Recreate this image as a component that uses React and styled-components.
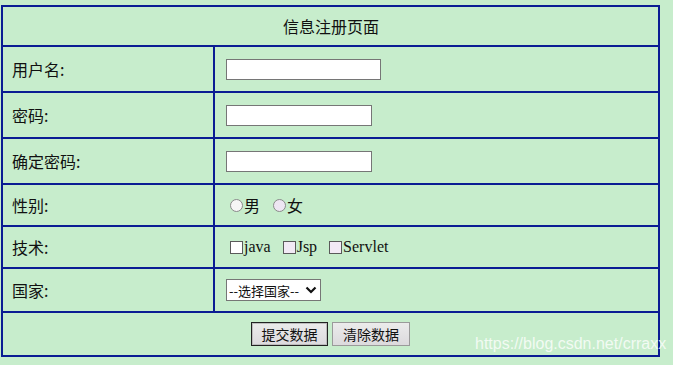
import React from "react";
import styled, { createGlobalStyle } from "styled-components";

const GlobalStyle = createGlobalStyle`
  html, body {
    margin: 0;
    padding: 0;
    background-color: #c7edcc;
  }
  body {
    font-family: "Liberation Sans", "Noto Sans CJK SC", sans-serif;
    color: #111;
  }
`;

const Page = styled.div`
  position: relative;
  padding: 5px 0 0 1px;
  width: 673px;
  height: 365px;
  box-sizing: border-box;
  overflow: hidden;
`;

const FormTable = styled.form`
  display: grid;
  grid-template-columns: 210px 443px;
  grid-template-rows: 38px 44px 44px 44px 40px 40px 42px 42px;
  gap: 2px;
  width: max-content;
  background-color: #0b1c93;
  border: 2px solid #0b1c93;
  margin: 0;
`;

const Cell = styled.div`
  background-color: #c7edcc;
  display: flex;
  align-items: center;
  justify-content: ${(p) => (p.$center ? "center" : "flex-start")};
  grid-column: ${(p) => (p.$span ? "1 / span 2" : "auto")};
  padding-left: ${(p) => (p.$center ? 0 : p.$pad || 9)}px;
  font-family: "Noto Sans CJK SC", sans-serif;
  font-size: 16px;
  font-weight: 400;
  color: #111;
  gap: ${(p) => p.$gap || 0}px;
`;

const Title = styled.span`
  font-size: 16px;
  margin-left: 1px;
`;

const TextInput = styled.input`
  box-sizing: border-box;
  width: ${(p) => p.$w}px;
  height: 21px;
  border: 1px solid #767676;
  background: #fff;
  padding: 1px 2px;
  margin: 0;
  outline: none;
`;

const Choice = styled.label`
  display: inline-flex;
  align-items: center;
  margin-right: ${(p) => p.$space}px;
  font-family: ${(p) =>
    p.$serif
      ? `"Liberation Serif", "Noto Sans CJK SC", serif`
      : `"Noto Sans CJK SC", sans-serif`};
  font-size: 16px;
  font-weight: 400;
  color: #111;
`;

const Radio = styled.input.attrs({ type: "radio" })`
  appearance: none;
  box-sizing: border-box;
  width: 13px;
  height: 13px;
  margin: 0 1px 0 0;
  border: 1px solid #8a8a8a;
  border-radius: 50%;
  background: ${(p) => (p.$tint ? "#eee6f3" : "#f6f6f6")};
`;

const Check = styled.input.attrs({ type: "checkbox" })`
  appearance: none;
  box-sizing: border-box;
  width: 13px;
  height: 13px;
  margin: 0 1px 0 0;
  border: 1px solid #5a5a5a;
  border-radius: 0;
  background: ${(p) => (p.$tint ? "#f2eaf5" : "#fff")};
`;

const SelectBox = styled.div`
  box-sizing: border-box;
  display: flex;
  align-items: center;
  width: 95px;
  height: 22px;
  border: 1px solid #767676;
  background: #fff;
  padding: 0 3px 0 2px;
  gap: 4px;
`;

const Select = styled.select`
  appearance: none;
  border: none;
  outline: none;
  background: transparent;
  padding: 0;
  margin: 0;
  font-family: "Noto Sans CJK SC", sans-serif;
  font-size: 13px;
  font-weight: 400;
  color: #111;
  flex: 1;
`;

const Button = styled.button`
  box-sizing: border-box;
  width: ${(p) => p.$w}px;
  height: 24px;
  padding: 0;
  margin: 0;
  font-family: "Noto Sans CJK SC", sans-serif;
  font-size: 14px;
  font-weight: 400;
  color: #111;
  background: linear-gradient(#ebebeb, #dcdadd);
  border: 1px solid ${(p) => (p.$primary ? "#222" : "#9a9a9a")};
  box-shadow: ${(p) => (p.$primary ? "inset 0 0 0 1px #bdbdbd" : "none")};
  border-radius: 0;
`;

const Watermark = styled.div`
  position: absolute;
  left: 475px;
  top: 335px;
  font-family: "Liberation Sans", Arial, sans-serif;
  font-size: 16px;
  color: rgba(255, 255, 255, 0.78);
  white-space: nowrap;
  pointer-events: none;
`;

const Chevron = () => (
  <svg width="12" height="10" viewBox="0 0 12 10">
    <path d="M1.5 2.5 L6 7 L10.5 2.5" fill="none" stroke="#111" strokeWidth="2.2" />
  </svg>
);

const App = () => {
  return (
    <Page>
      <GlobalStyle />
      <FormTable onSubmit={(e) => e.preventDefault()}>
        <Cell $span $center>
          <Title>信息注册页面</Title>
        </Cell>

        <Cell>用户名:</Cell>
        <Cell $pad={11}>
          <TextInput $w={155} />
        </Cell>

        <Cell>密码:</Cell>
        <Cell $pad={11}>
          <TextInput $w={146} type="password" />
        </Cell>

        <Cell>确定密码:</Cell>
        <Cell $pad={11}>
          <TextInput $w={146} type="password" />
        </Cell>

        <Cell>性别:</Cell>
        <Cell $pad={15}>
          <Choice $space={13}>
            <Radio name="sex" />男
          </Choice>
          <Choice $space={0}>
            <Radio name="sex" $tint />女
          </Choice>
        </Cell>

        <Cell>技术:</Cell>
        <Cell $pad={15}>
          <Choice $serif $space={12}>
            <Check />java
          </Choice>
          <Choice $serif $space={12}>
            <Check $tint />Jsp
          </Choice>
          <Choice $serif $space={0}>
            <Check $tint />Servlet
          </Choice>
        </Cell>

        <Cell>国家:</Cell>
        <Cell $pad={11}>
          <SelectBox>
            <Select defaultValue="">
              <option value="">--选择国家--</option>
              <option value="cn">中国</option>
              <option value="us">美国</option>
            </Select>
            <Chevron />
          </SelectBox>
        </Cell>

        <Cell $span $center $gap={4}>
          <Button $w={77} $primary type="submit">提交数据</Button>
          <Button $w={78} type="reset">清除数据</Button>
        </Cell>
      </FormTable>
      <Watermark>https://blog.csdn.net/crraxx</Watermark>
    </Page>
  );
};

export default App;
